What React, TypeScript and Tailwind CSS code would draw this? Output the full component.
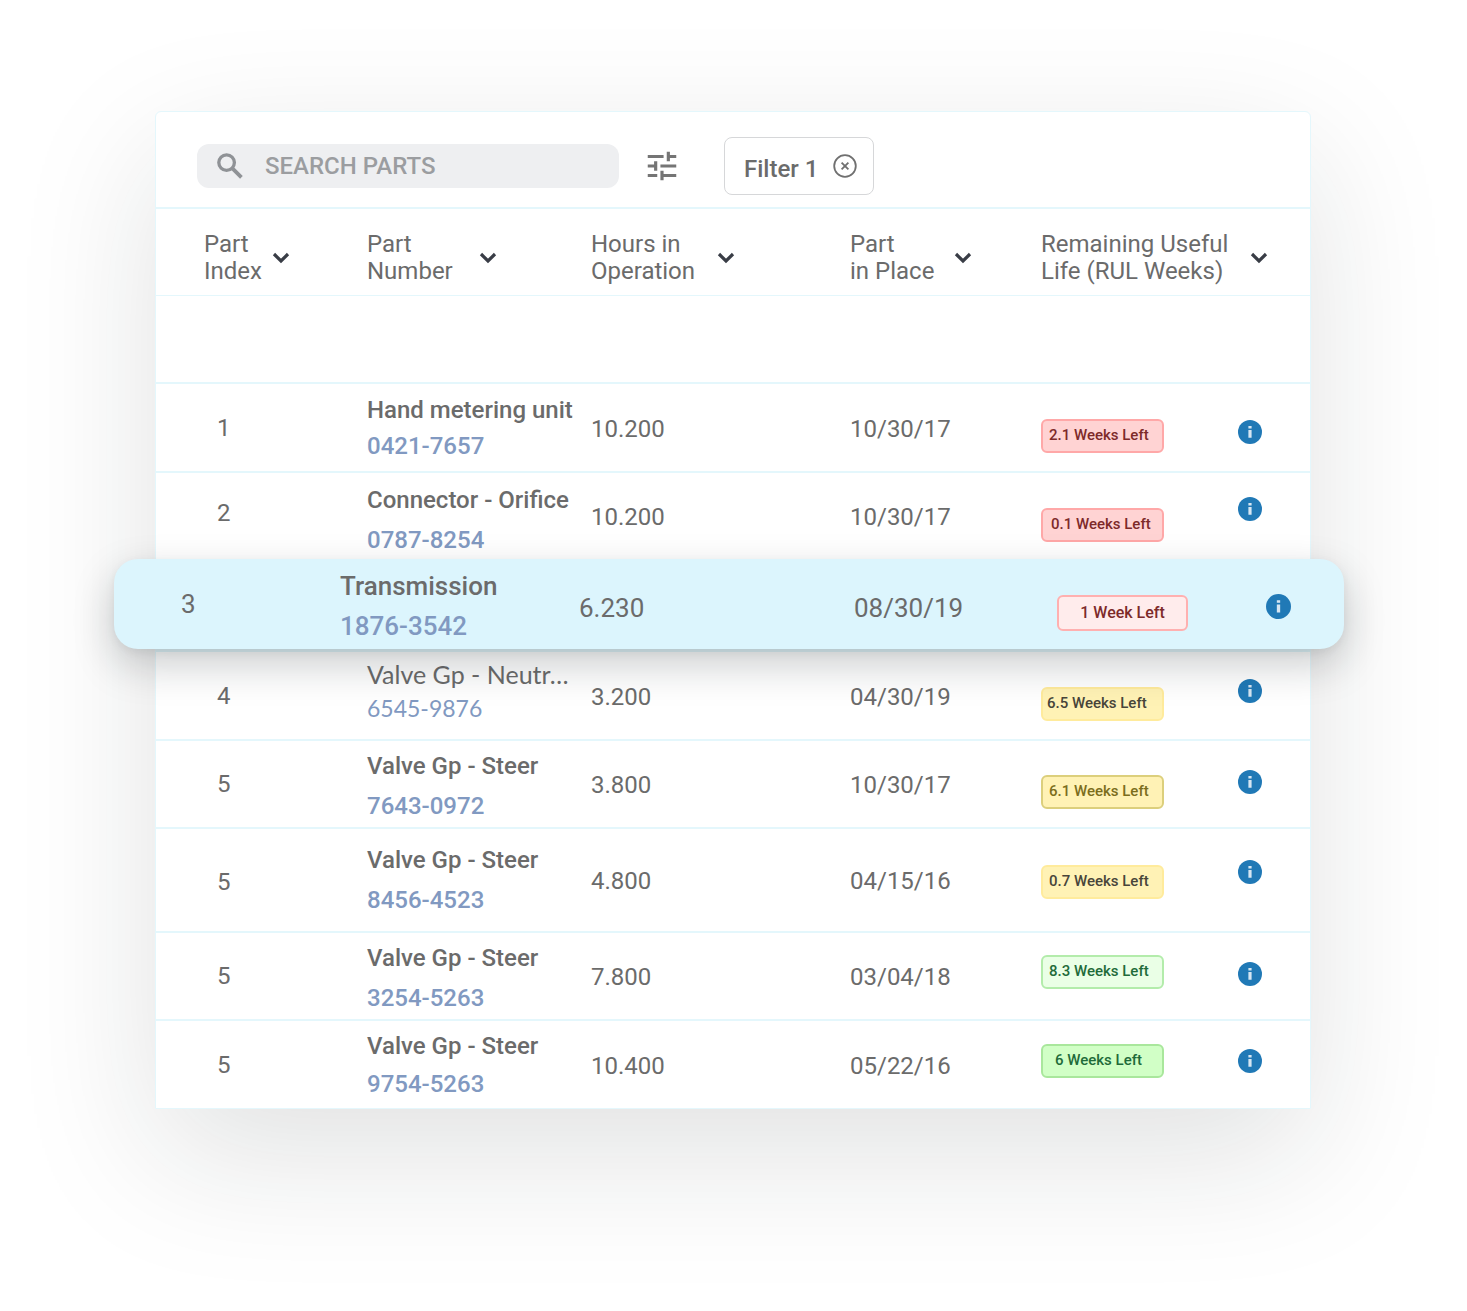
import { useState } from 'react';
import { MdTune } from 'react-icons/md';

type Part = {
  index: string;
  name: string;
  number: string;
  hours: string;
  place: string;
  rul: string;
  badge: string;
  badgePad: string;
  infoPad: string;
  indexPad?: string;
  nameLayout: string;
  row: string;
  light?: boolean;
  active?: boolean;
};

const COLUMNS = [
  { lines: ['Part', 'Index'], pad: 'pl-12', gap: 'gap-2.5' },
  { lines: ['Part', 'Number'], pad: '', gap: 'gap-[26px]' },
  { lines: ['Hours in', 'Operation'], pad: '', gap: 'gap-[22px]' },
  { lines: ['Part', 'in Place'], pad: '', gap: 'gap-5' },
  { lines: ['Remaining Useful', 'Life (RUL Weeks)'], pad: '', gap: 'gap-[22px]' },
];

const GRID = 'grid grid-cols-[211fr_224fr_259fr_191fr_269fr]';
const ACTIVE_GRID = 'grid grid-cols-[226fr_239fr_275fr_203fr_287fr]';

const RED = 'border-[#ffa8a8] bg-[#ffd3d3] text-[#7d2a2a] pl-1.5';
const YELLOW = 'border-[#ffeb9c] bg-[#fff2b5] text-[#48453a] pl-1.5';

const PARTS: Part[] = [
  { index: '1', name: 'Hand metering unit', number: '0421-7657', hours: '10.200', place: '10/30/17', rul: '2.1 Weeks Left', badge: RED, badgePad: 'pt-4', infoPad: 'pt-2', nameLayout: 'gap-2', row: 'h-[89px] border-b-2' },
  { index: '2', name: 'Connector - Orifice', number: '0787-8254', hours: '10.200', place: '10/30/17', rul: '0.1 Weeks Left', badge: 'border-[#ffa8a8] bg-[#ffd3d3] text-[#7d2a2a] pl-2', badgePad: 'pt-[18px]', infoPad: 'pb-3.5', indexPad: 'pb-1.5', nameLayout: 'gap-3 pt-2', row: 'h-[86px]' },
  { index: '3', name: 'Transmission', number: '1876-3542', hours: '6.230', place: '08/30/19', rul: '1 Week Left', badge: 'border-[#ffb0b0] bg-[#ffecec] text-[#7d2a2a] justify-center', badgePad: 'pt-[18px]', infoPad: 'pt-1', nameLayout: 'gap-3 pt-1', row: 'h-[90px]', active: true },
  { index: '4', name: 'Valve Gp - Neutr…', number: '6545-9876', hours: '3.200', place: '04/30/19', rul: '6.5 Weeks Left', badge: 'border-[#ffeb9c] bg-[#fff2b5] text-[#48453a] pl-1', badgePad: 'pt-4', infoPad: 'pb-2.5', nameLayout: 'gap-1.5 pb-2.5', row: 'h-[92px] border-t-[3px] border-b-2', light: true },
  { index: '5', name: 'Valve Gp - Steer', number: '7643-0972', hours: '3.800', place: '10/30/17', rul: '6.1 Weeks Left', badge: 'border-[#dccf7c] bg-[#fff2b5] text-[#7b6d1c] pl-1.5', badgePad: 'pt-4', infoPad: 'pb-1', nameLayout: 'gap-3 pt-1', row: 'h-[88px] border-b-2' },
  { index: '5', name: 'Valve Gp - Steer', number: '8456-4523', hours: '4.800', place: '04/15/16', rul: '0.7 Weeks Left', badge: YELLOW, badgePad: 'pt-1', infoPad: 'pb-4', indexPad: 'pt-1', nameLayout: 'gap-3', row: 'h-[104px] border-b-2' },
  { index: '5', name: 'Valve Gp - Steer', number: '3254-5263', hours: '7.800', place: '03/04/18', rul: '8.3 Weeks Left', badge: 'border-[#b3ecab] bg-[#eaffe6] text-[#1f6b3a] pl-1.5', badgePad: 'pb-2', infoPad: 'pb-1', nameLayout: 'gap-3 pt-1', row: 'h-[88px] border-b-2' },
  { index: '5', name: 'Valve Gp - Steer', number: '9754-5263', hours: '10.400', place: '05/22/16', rul: '6 Weeks Left', badge: 'border-[#a9e79c] bg-[#d1ffc6] text-[#1f6b3a] pl-3', badgePad: 'pb-2', infoPad: 'pb-2', nameLayout: 'gap-2.5', row: 'h-[87px]' },
];

function SearchIcon() {
  return (
    <svg viewBox="0 0 26 26" className="size-[26px] shrink-0" fill="none" stroke="#8f9296" strokeWidth="3.3" aria-hidden="true">
      <circle cx="9.6" cy="9.6" r="7.8" />
      <path d="m15.4 15.4 9 9" strokeWidth="3.8" />
    </svg>
  );
}

function Chevron() {
  return (
    <svg viewBox="0 0 18 12" className="h-3 w-[18px] shrink-0" fill="none" stroke="#393d46" strokeWidth="3.2" aria-hidden="true">
      <path d="M2 2 9 9 16 2" />
    </svg>
  );
}

function ClearIcon() {
  return (
    <svg viewBox="0 0 24 24" className="size-6" fill="none" stroke="#707070" strokeWidth="1.8" aria-hidden="true">
      <circle cx="12" cy="12" r="10.8" />
      <path d="m8.6 8.6 6.8 6.8m0-6.8-6.8 6.8" />
    </svg>
  );
}

function InfoIcon({ className }: { className: string }) {
  return (
    <svg viewBox="0 0 24 24" className={className} aria-hidden="true">
      <circle cx="12" cy="12" r="12" fill="#2079b6" />
      <path d="M10.4 6h3.2v2.4h-3.2zM10.4 10h3.2v7.8h-3.2z" fill="#d6e6f2" />
    </svg>
  );
}

function Toolbar() {
  const [query, setQuery] = useState('');
  return (
    <div className="flex h-[97px] items-center border-b-2 border-[#e4f7fc] pt-3 pl-[41px]">
      <div className="flex h-11 w-[422px] min-w-0 items-center gap-[22px] rounded-xl bg-[#eeeff1] pl-5">
        <SearchIcon />
        <input
          type="text"
          aria-label="Search parts"
          value={query}
          onChange={(e) => setQuery(e.target.value)}
          placeholder="SEARCH PARTS"
          className="w-full min-w-0 bg-transparent text-2xl font-medium text-[#6b6b6b] outline-none placeholder:text-[#9b9da0]"
        />
      </div>
      <button type="button" aria-label="Filter settings" className="ml-6 text-[#757575]">
        <MdTune className="size-[38px]" />
      </button>
      <div className="ml-[43px] flex h-[58px] items-center gap-[15px] rounded-lg border border-[#d6d7d9] pr-4 pl-[19px]">
        <span className="pt-1.5 text-2xl font-medium text-[#6b6b6b]">Filter 1</span>
        <button type="button" aria-label="Remove Filter 1">
          <ClearIcon />
        </button>
      </div>
    </div>
  );
}

function PartRow({ part }: { part: Part }) {
  const { active, light } = part;
  return (
    <tr
      className={`${part.row} ${
        active
          ? `${ACTIVE_GRID} relative z-10 -mr-[34px] -ml-[42px] rounded-3xl bg-[#dcf5fd] text-[26px] shadow-[0_16px_40px_rgba(20,28,34,0.22),0_3px_10px_rgba(20,28,34,0.06)]`
          : `${GRID} border-[#e4f7fc] text-2xl`
      }`}
    >
      <td className={`flex items-center ${part.indexPad ?? ''} ${active ? 'pl-[67px]' : 'pl-[61px]'}`}>{part.index}</td>
      <td className={`flex flex-col justify-center whitespace-nowrap ${part.nameLayout} ${light ? "font-['Lato',sans-serif]" : 'font-medium'}`}>
        <span className={`leading-7 ${light ? 'text-[25px]' : ''}`}>{part.name}</span>
        <a href="#part" className={`leading-7 text-[#8199c1] ${light ? 'text-[23px]' : ''}`}>
          {part.number}
        </a>
      </td>
      <td className={`flex items-center ${active ? 'pt-2' : 'pt-0.5'}`}>{part.hours}</td>
      <td className={`flex items-center ${active ? 'pt-2' : 'pt-0.5'}`}>{part.place}</td>
      <td className="flex justify-between">
        <div className={`flex items-center ${part.badgePad}`}>
          <span
            className={`flex items-center rounded-md border-2 font-medium whitespace-nowrap ${part.badge} ${
              active ? 'h-9 w-[131px] text-base' : 'h-[34px] w-[123px] text-[15px]'
            }`}
          >
            {part.rul}
          </span>
        </div>
        <div className={`flex items-center ${part.infoPad} ${active ? 'pr-[53px]' : 'pr-12'}`}>
          <button type="button" aria-label={`Details for ${part.name}`}>
            <InfoIcon className={active ? 'size-[25px]' : 'size-6'} />
          </button>
        </div>
      </td>
    </tr>
  );
}

export default function App() {
  return (
    <main className="min-h-screen overflow-hidden bg-white pt-[111px] pr-[156px] pb-[202px] pl-[155px] font-['Roboto',sans-serif] text-[#6b6b6b]">
      <section className="rounded-t-md border border-[#e4f7fc] bg-white shadow-[0_46px_140px_rgba(20,28,34,0.13)]">
        <Toolbar />
        <table className="block">
          <thead className="block">
            <tr className={`${GRID} h-[87px] border-b border-[#e4f7fc]`}>
              {COLUMNS.map((col) => (
                <th key={col.lines.join(' ')} className={`flex items-center pt-3 font-normal ${col.pad}`}>
                  <button type="button" className={`flex items-center text-left text-2xl leading-[27px] whitespace-nowrap ${col.gap}`}>
                    <span>
                      {col.lines[0]}
                      <br />
                      {col.lines[1]}
                    </span>
                    <Chevron />
                  </button>
                </th>
              ))}
            </tr>
          </thead>
          <tbody className="block">
            <tr className="block h-[88px] border-b-2 border-[#e4f7fc]">
              <td colSpan={5} />
            </tr>
            {PARTS.map((part) => (
              <PartRow key={part.number} part={part} />
            ))}
          </tbody>
        </table>
      </section>
    </main>
  );
}
